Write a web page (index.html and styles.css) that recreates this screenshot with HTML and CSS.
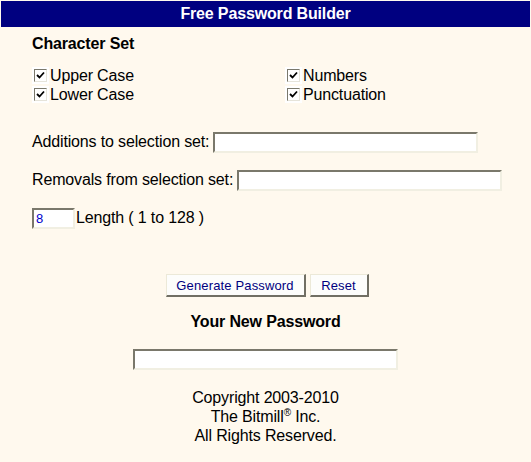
FILE: index.html
```html
<!DOCTYPE html>
<html lang="en">

<head>
  <meta charset="UTF-8">
  <meta name="viewport" content="width=device-width, initial-scale=1.0">
  <title>Free Password Builder</title>
  <link rel="stylesheet" href="styles.css">
</head>

<body>
  <div class="page">
    <div class="title">Free Password Builder</div>

    <div class="content">
      <div class="section-title">Character Set</div>

      <div class="charset">
        <label class="opt"><span class="box"><svg viewBox="0 0 9 9" width="9" height="9"><path d="M1 4 L3.5 6.5 L8 1.5" fill="none" stroke="#000" stroke-width="1.8"/></svg></span>Upper Case</label>
        <label class="opt"><span class="box"><svg viewBox="0 0 9 9" width="9" height="9"><path d="M1 4 L3.5 6.5 L8 1.5" fill="none" stroke="#000" stroke-width="1.8"/></svg></span>Numbers</label>
        <label class="opt"><span class="box"><svg viewBox="0 0 9 9" width="9" height="9"><path d="M1 4 L3.5 6.5 L8 1.5" fill="none" stroke="#000" stroke-width="1.8"/></svg></span>Lower Case</label>
        <label class="opt"><span class="box"><svg viewBox="0 0 9 9" width="9" height="9"><path d="M1 4 L3.5 6.5 L8 1.5" fill="none" stroke="#000" stroke-width="1.8"/></svg></span>Punctuation</label>
      </div>

      <div class="fields">
        <div class="field">Additions to selection set:<input class="text wide" type="text"></div>
        <div class="field">Removals from selection set:<input class="text wide" type="text"></div>
        <div class="field"><input class="text short" type="text" value="8">Length ( 1 to 128 )</div>
      </div>
    </div>

    <div class="actions">
      <button class="btn gen">Generate Password</button>
      <button class="btn reset">Reset</button>
    </div>

    <div class="result-title">Your New Password</div>
    <div class="result"><input class="text wide" type="text"></div>

    <div class="copy">
      Copyright 2003-2010<br>
      The Bitmill<sup>®</sup> Inc.<br>
      All Rights Reserved.
    </div>
  </div>
</body>

</html>
```

FILE: styles.css
```css
body {
  margin: 0;
  background: #fff9ee;
  font-family: "Liberation Sans", Arial, sans-serif;
  font-size: 16px;
  letter-spacing: -0.15px;
  color: #000;
}

.page {
  padding: 1px 1px 0 1px;
}

.title {
  height: 26px;
  line-height: 26px;
  background: #000080;
  color: #fff;
  font-weight: bold;
  text-align: center;
}

.content {
  padding-left: 31px;
}

.section-title {
  margin-top: 8px;
  font-weight: bold;
}

.charset {
  display: grid;
  grid-template-columns: 253px auto;
  margin: 13px 0 0 2px;
  line-height: 19px;
}

.opt {
  display: flex;
  align-items: center;
}

.box {
  display: inline-flex;
  align-items: center;
  justify-content: center;
  width: 11px;
  height: 11px;
  margin-right: 3px;
  background: #fff;
  border: 1px solid;
  border-color: #7a786b #e6e4da #e6e4da #7a786b;
  box-shadow: 0 0 0 2px #fff;
}

.fields {
  display: flex;
  flex-direction: column;
  gap: 17px;
  margin-top: 28px;
}

.field {
  display: flex;
  align-items: baseline;
  height: 21px;
}

.text {
  box-sizing: border-box;
  height: 21px;
  padding: 1px 2px;
  background: #fff;
  border: 2px solid;
  border-color: #7a786b #f1efe2 #f1efe2 #7a786b;
  font-family: "Liberation Sans", Arial, sans-serif;
  font-size: 13px;
  letter-spacing: 0;
  color: #0000cc;
  outline: none;
}

.wide {
  width: 265px;
  margin-left: 4px;
}

.short {
  width: 43px;
  margin-right: 1px;
}

.actions {
  display: flex;
  justify-content: center;
  gap: 4px;
  margin-top: 45px;
  padding-left: 3px;
}

.btn {
  height: 23px;
  padding: 0;
  background: #fdfdfb;
  border-style: solid;
  border-width: 1px 2px 2px 1px;
  border-color: #ece9d8 #716f64 #716f64 #ece9d8;
  font-family: "Liberation Sans", Arial, sans-serif;
  font-size: 13px;
  letter-spacing: 0.15px;
  color: #000080;
}

.gen {
  width: 140px;
}

.reset {
  width: 59px;
}

.result-title {
  margin-top: 16px;
  font-weight: bold;
  text-align: center;
}

.result {
  display: flex;
  justify-content: center;
  margin-top: 18px;
}

.result .wide {
  margin-left: 0;
}

.copy {
  margin-top: 18px;
  line-height: 19px;
  text-align: center;
}

.copy sup {
  font-size: 10px;
  line-height: 0;
}
```
